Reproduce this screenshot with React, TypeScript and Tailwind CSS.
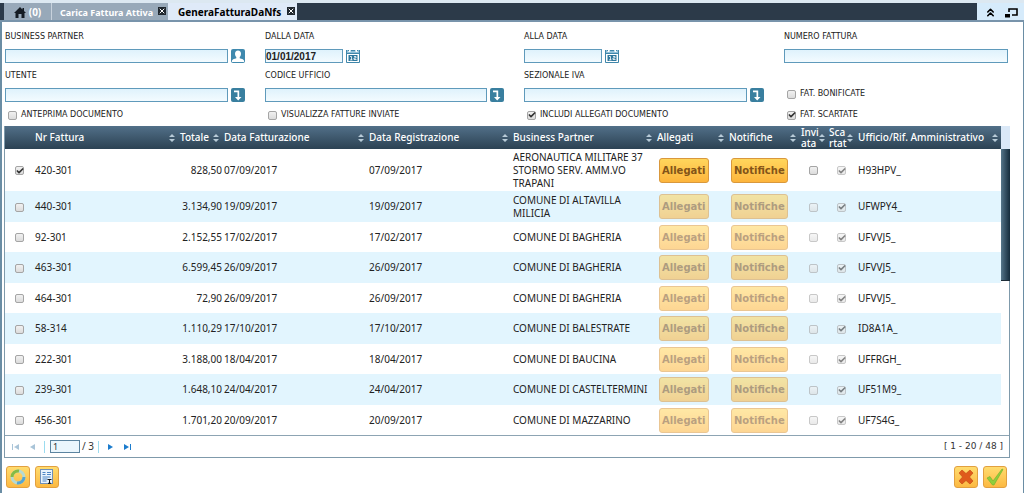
import React, { useState } from 'react';
import { Check, ChevronsUp, X } from 'lucide-react';

interface Row {
  nr: string;
  totale: string;
  fatturazione: string;
  partner: string;
  ufficio: string;
}

const ROWS: Row[] = [
  { nr: '420-301', totale: '828,50', fatturazione: '07/09/2017', partner: 'AERONAUTICA MILITARE 37 STORMO SERV. AMM.VO TRAPANI', ufficio: 'H93HPV_' },
  { nr: '440-301', totale: '3.134,90', fatturazione: '19/09/2017', partner: 'COMUNE DI ALTAVILLA MILICIA', ufficio: 'UFWPY4_' },
  { nr: '92-301', totale: '2.152,55', fatturazione: '17/02/2017', partner: 'COMUNE DI BAGHERIA', ufficio: 'UFVVJ5_' },
  { nr: '463-301', totale: '6.599,45', fatturazione: '26/09/2017', partner: 'COMUNE DI BAGHERIA', ufficio: 'UFVVJ5_' },
  { nr: '464-301', totale: '72,90', fatturazione: '26/09/2017', partner: 'COMUNE DI BAGHERIA', ufficio: 'UFVVJ5_' },
  { nr: '58-314', totale: '1.110,29', fatturazione: '17/10/2017', partner: 'COMUNE DI BALESTRATE', ufficio: 'ID8A1A_' },
  { nr: '222-301', totale: '3.188,00', fatturazione: '18/04/2017', partner: 'COMUNE DI BAUCINA', ufficio: 'UFFRGH_' },
  { nr: '239-301', totale: '1.648,10', fatturazione: '24/04/2017', partner: 'COMUNE DI CASTELTERMINI', ufficio: 'UF51M9_' },
  { nr: '456-301', totale: '1.701,20', fatturazione: '20/09/2017', partner: 'COMUNE DI MAZZARINO', ufficio: 'UF7S4G_' },
];

const INPUT = 'h-[14px] min-w-0 rounded-none border border-[#5f9abb] bg-linear-to-b from-[#dff2fc] to-[#f3fbff] px-0 outline-none';
const ICON_BUTTON = 'flex h-[22px] w-6 items-center justify-center rounded-[3px] border border-[#e2a040] bg-linear-to-b from-[#ffdc6e] to-[#fcb941]';

function CheckBox({ id, label, checked = false, disabled = false }: { id: string; label?: string; checked?: boolean; disabled?: boolean }) {
  const [on, setOn] = useState(checked);
  return (
    <span className={`inline-grid size-[9px] shrink-0 place-items-center align-middle ${disabled ? 'opacity-60' : ''}`}>
      <input
        id={id}
        type="checkbox"
        aria-label={label}
        checked={on}
        disabled={disabled}
        onChange={() => setOn(!on)}
        className="col-start-1 row-start-1 size-[9px] appearance-none rounded-[2px] border border-[#a5a5a5] bg-linear-to-b from-[#f1f1f1] to-[#dcdcdc]"
      />
      {on && <Check size={8} strokeWidth={5} className="pointer-events-none col-start-1 row-start-1 text-[#333]" />}
    </span>
  );
}

function CheckField({ id, label, checked }: { id: string; label: string; checked?: boolean }) {
  return (
    <div className="flex h-3 items-center gap-1 pl-[3px]">
      <CheckBox id={id} checked={checked} />
      <label htmlFor={id}>{label}</label>
    </div>
  );
}

function Field({ id, label, children }: { id: string; label: string; children: React.ReactNode }) {
  return (
    <div className="min-w-0">
      <label htmlFor={id} className="block h-3">{label}</label>
      <div className="mt-1.5 flex h-[14px] items-center gap-[3px]">{children}</div>
    </div>
  );
}

function PersonIcon() {
  return (
    <svg viewBox="0 0 14 14" className="size-[14px]">
      <rect width="14" height="14" rx="2" fill="#3f89ae" />
      <path d="M7 1.5c2 0 3 1.4 3 3.3 0 1.5-.6 2.6-1.3 3.2v1.3c1.8.5 3.8 1 4.3 2.2V13H1v-1.5C1.5 10.3 3.5 9.8 5.3 9.3V8C4.6 7.4 4 6.3 4 4.8 4 2.9 5 1.5 7 1.5z" fill="#fff" />
    </svg>
  );
}

function CalendarIcon() {
  return (
    <svg viewBox="0 0 14 14" className="size-[14px]">
      <path d="M1 1h1.5v2h2V1h5v2h2V1H13v4H1z" fill="#8fbfd8" />
      <path d="M.5 1v12.5h13V1M2 1.5h1M5 1.5h4M11 1.5h1M1 4.5h12" fill="none" stroke="#3f86aa" />
      <rect x="2.5" y="6" width="9" height="6" fill="#2f789d" />
      <path d="M4 7.5h1.5v3.5M4 10.9h2.5M8 7.5h2v1.5H8v1.5h2.5" fill="none" stroke="#fff" strokeWidth=".8" />
    </svg>
  );
}

function LookupIcon() {
  return (
    <svg viewBox="0 0 14 14" className="size-[14px]">
      <rect width="14" height="14" rx="2" fill="#397f9f" />
      <path d="M3 2.5h5.2V9h2.3l-3.300 3.500L4 9h2.500V4.300H3z" fill="#fff" />
    </svg>
  );
}

function SortIcon() {
  return (
    <svg viewBox="0 0 6 8" className="h-2 w-1.5 shrink-0" fill="#b8cbd8">
      <path d="M3 0l3 3H0zM3 8L0 5h6z" />
    </svg>
  );
}

function Lookup({ id, label, person }: { id: string; label: string; person?: boolean }) {
  return (
    <Field id={id} label={label}>
      <input id={id} className={`${INPUT} flex-1`} />
      <button type="button" aria-label={`Cerca ${label}`} className="mr-5">{person ? <PersonIcon /> : <LookupIcon />}</button>
    </Field>
  );
}

function DateField({ id, label, value }: { id: string; label: string; value?: string }) {
  return (
    <Field id={id} label={label}>
      <input id={id} defaultValue={value} className={`${INPUT} w-[78px] font-['Liberation_Sans',sans-serif] text-[10px] font-bold leading-3`} />
      <button type="button" aria-label={`Calendario ${label}`}><CalendarIcon /></button>
    </Field>
  );
}

function Th({ children }: { children: React.ReactNode }) {
  return (
    <th className="p-0 pl-0.5 font-medium">
      <div className="flex items-center justify-between pr-[3px]">
        <span>{children}</span>
        <SortIcon />
      </div>
    </th>
  );
}

function RowButton({ disabled, children }: { disabled: boolean; children: React.ReactNode }) {
  return (
    <button
      disabled={disabled}
      className="ml-0.5 block h-[25px] rounded-[3px] border border-[#d9983c] bg-linear-to-b from-[#ffd65c] to-[#fdb53c] px-0.5 font-['DejaVu_Sans',sans-serif] text-[10px] font-bold text-[#835418] disabled:opacity-55"
    >
      {children}
    </button>
  );
}

function Tabs() {
  return (
    <header className="flex h-[22px] items-stretch border-b-2 border-t-3 border-b-[#7894ab] border-t-[#dce8f1] bg-[#2c3a49] pl-1 text-[10px] font-bold text-white">
      <nav className="flex flex-1 items-stretch">
        <button className="flex w-[47px] items-center justify-center gap-[3px] bg-[#98a9b9] pt-0.5">
          <svg viewBox="0 0 12 11" className="h-[11px] w-3" fill="#151c23">
            <path d="M6 0L0 6h1.5v5h3V7h3v4h3V6H12L10 4V1H8.5v1.5z" />
          </svg>
          (0)
        </button>
        <div className="flex w-[117px] items-center justify-between border-l border-[#c8d2dc] bg-[#98a9b9] pl-2 pr-0.5">
          <button className="pt-0.5 text-[9px]">Carica Fattura Attiva</button>
          <button aria-label="Chiudi Carica Fattura Attiva" className="mb-0.5 bg-[#20272e]"><X size={8} strokeWidth={3} /></button>
        </div>
        <div className="flex w-[129px] items-center justify-between bg-[#dfeaf8] pl-[10px] pr-0.5 text-black">
          <button className="pt-0.5">GeneraFatturaDaNfs</button>
          <button aria-label="Chiudi GeneraFatturaDaNfs" className="mb-0.5 bg-[#20272e] text-white"><X size={8} strokeWidth={3} /></button>
        </div>
      </nav>
      <div className="flex w-[47px] items-center gap-2 bg-[#d6ebfb] pl-[7px] pt-0.5 text-black">
        <button aria-label="Comprimi"><ChevronsUp size={13} strokeWidth={3} /></button>
        <button aria-label="Ripristina">
          <svg viewBox="0 0 13 10" className="h-[10px] w-[13px]">
            <path d="M4 4V1h8v6H7" fill="none" stroke="#000" strokeWidth="1.6" />
            <rect y="6" width="5" height="3.5" />
          </svg>
        </button>
      </div>
    </header>
  );
}

function Filters() {
  return (
    <form className="grid grid-cols-[260fr_259fr_260fr_224fr] gap-y-[7px] pl-[3px] pr-[15px] pt-[9px] font-['DejaVu_Sans',sans-serif] text-[8px] leading-3 text-[#222]">
      <Lookup id="partner" label="BUSINESS PARTNER" person />
      <DateField id="dalla" label="DALLA DATA" value="01/01/2017" />
      <DateField id="alla" label="ALLA DATA" />
      <Field id="numero" label="NUMERO FATTURA">
        <input id="numero" className={`${INPUT} flex-1`} />
      </Field>
      <Lookup id="utente" label="UTENTE" />
      <Lookup id="codice" label="CODICE UFFICIO" />
      <Lookup id="sezionale" label="SEZIONALE IVA" />
      <div className="pt-[18px]">
        <CheckField id="bonificate" label="FAT. BONIFICATE" />
      </div>
      <CheckField id="anteprima" label="ANTEPRIMA DOCUMENTO" />
      <CheckField id="inviate" label="VISUALIZZA FATTURE INVIATE" />
      <CheckField id="allegati" label="INCLUDI ALLEGATI DOCUMENTO" checked />
      <CheckField id="scartate" label="FAT. SCARTATE" checked />
    </form>
  );
}

function InvoiceTable() {
  return (
    <div className="flex">
      <table className="w-full min-w-0 flex-1 table-fixed border-collapse text-left text-[10px] leading-[13px] text-[#222]">
        <colgroup>
          <col className="w-[28px]" />
          <col className="w-[145px]" />
          <col className="w-[44px]" />
          <col className="w-[145px]" />
          <col className="w-[144px]" />
          <col className="w-[144px]" />
          <col className="w-[72px]" />
          <col className="w-[72px]" />
          <col className="w-[28px]" />
          <col className="w-[29px]" />
          <col className="w-[145px]" />
        </colgroup>
        <thead>
          <tr className="h-[23px] bg-linear-to-b from-[#527089] to-[#2c4253] text-white">
            <th aria-label="Seleziona" />
            <Th>Nr Fattura</Th>
            <Th>Totale</Th>
            <Th>Data Fatturazione</Th>
            <Th>Data Registrazione</Th>
            <Th>Business Partner</Th>
            <Th>Allegati</Th>
            <Th>Notifiche</Th>
            <Th><span className="block leading-[11px]">Invi<br />ata</span></Th>
            <Th><span className="block leading-[11px]">Sca<br />rtat</span></Th>
            <Th>Ufficio/Rif. Amministrativo</Th>
          </tr>
        </thead>
        <tbody>
          {ROWS.map((row, i) => (
            <tr key={row.nr} className={i === 0 ? 'h-[42px]' : i % 2 ? 'h-[31px] bg-[#e2f5fe]' : 'h-[30px]'}>
              <td className="p-0 pl-[10px] leading-none"><CheckBox id={`sel-${i}`} label={`Seleziona ${row.nr}`} checked={i === 0} /></td>
              <td className="p-0 pl-0.5">{row.nr}</td>
              <td className="p-0 text-right">{row.totale}</td>
              <td className="p-0 pl-0.5">{row.fatturazione}</td>
              <td className="p-0 pl-0.5">{row.fatturazione}</td>
              <td className="p-0 pl-0.5">{row.partner}</td>
              <td className="p-0 pl-0.5"><RowButton disabled={i > 0}>Allegati</RowButton></td>
              <td className="p-0 pl-0.5"><RowButton disabled={i > 0}>Notifiche</RowButton></td>
              <td className="p-0 text-center leading-none"><CheckBox id={`inv-${i}`} label={`Inviata ${row.nr}`} disabled={i > 0} /></td>
              <td className="p-0 text-center leading-none"><CheckBox id={`sca-${i}`} label={`Scartata ${row.nr}`} checked disabled /></td>
              <td className="p-0 pl-0.5">{row.ufficio}</td>
            </tr>
          ))}
        </tbody>
      </table>
      <div className="w-[9px] shrink-0">
        <div className="h-[23px] bg-[#dae8f7]" />
        <div className="h-[132px] border-b border-[#1d2c38] bg-linear-to-r from-[#56768a] to-[#152c3c]" />
      </div>
    </div>
  );
}

function Pager() {
  return (
    <div className="flex h-[22px] items-center border-t border-[#8da4b3] pl-[7px] pr-1.5 text-[10px] text-[#333]">
      <button aria-label="Prima pagina" disabled>
        <svg viewBox="0 0 7 6" className="h-[6px] w-[7px]" fill="#a9c4d8"><path d="M0 0h1v6H0zM7 0v6L2 3z" /></svg>
      </button>
      <button aria-label="Pagina precedente" disabled className="ml-[11px]">
        <svg viewBox="0 0 5 6" className="h-[6px] w-[5px]" fill="#a9c4d8"><path d="M5 0v6L0 3z" /></svg>
      </button>
      <span className="ml-[9px] h-3 w-px bg-[#9bdcf0]" />
      <input aria-label="Pagina" defaultValue="1" className="ml-[5px] h-[13px] w-[30px] border border-[#5b84a0] bg-[#eaf6fd] px-0.5 text-[9px] outline-none" />
      <span className="ml-0.5">/ 3</span>
      <span className="ml-1 h-3 w-px bg-[#9bdcf0]" />
      <button aria-label="Pagina successiva" className="ml-[9px]">
        <svg viewBox="0 0 5 6" className="h-[6px] w-[5px]" fill="#1c7ccd"><path d="M0 0v6l5-3z" /></svg>
      </button>
      <button aria-label="Ultima pagina" className="ml-[11px]">
        <svg viewBox="0 0 7 6" className="h-[6px] w-[7px]" fill="#1c7ccd"><path d="M6 0h1v6H6zM0 0v6l5-3z" /></svg>
      </button>
      <span className="ml-auto font-['DejaVu_Sans',sans-serif] text-[9px]">[ 1 - 20 / 48 ]</span>
    </div>
  );
}

function Actions() {
  return (
    <footer className="flex gap-[5px] pl-1 pr-4 pt-2">
      <button aria-label="Aggiorna" className={ICON_BUTTON}>
        <svg viewBox="0 0 18 18" className="size-[18px]" fill="none" strokeWidth="3">
          <circle cx="9" cy="9" r="6" stroke="#b5d9d2" />
          <path d="M3 9A6 6 0 0 1 10 3.100" stroke="#86bb45" />
          <path d="M15 9A6 6 0 0 1 8 14.900" stroke="#55a5d2" />
        </svg>
      </button>
      <button aria-label="Dettaglio" className={ICON_BUTTON}>
        <svg viewBox="0 0 14 16" className="h-4 w-[14px]">
          <rect x=".5" y=".5" width="12" height="14" fill="#e9f3fc" stroke="#7090b8" />
          <path d="M2.5 3.5h3M7 3.5h4M2.5 5.5h3M7 5.5h4M2.5 8h8M2.5 10h5M2.5 12h4" stroke="#4e86c4" />
          <path d="M7.500 10.500h4M9.500 10v4M8 14.300h3" stroke="#111" />
        </svg>
      </button>
      <button aria-label="Annulla" className={`${ICON_BUTTON} ml-auto`}>
        <svg viewBox="0 0 16 16" className="size-4">
          <path d="M1 4l3-3 4 3.5L12 1l3 3-3.5 4 3.5 4-3 3-4-3.5L4 15l-3-3 3.5-4z" fill="#df5a1b" stroke="#c14410" strokeWidth=".6" />
        </svg>
      </button>
      <button aria-label="Conferma" className={ICON_BUTTON}>
        <svg viewBox="0 0 18 18" className="size-[18px]">
          <path d="M1 10l3-1.5L7 13 16 1l1 .5L8 17H6.5z" fill="#8fce3c" stroke="#6fae2a" strokeWidth=".6" />
        </svg>
      </button>
    </footer>
  );
}

export default function App() {
  return (
    <div className="flex min-h-screen flex-col bg-white font-['Noto_Sans',sans-serif]">
      <Tabs />
      <main className="flex-1 border-l-2 border-r border-[#6a8da4]">
        <Filters />
        <section className="ml-0.5 mr-[13px] mt-[5px] border-x border-b border-[#7f9aab]">
          <InvoiceTable />
          <Pager />
        </section>
        <Actions />
      </main>
    </div>
  );
}
